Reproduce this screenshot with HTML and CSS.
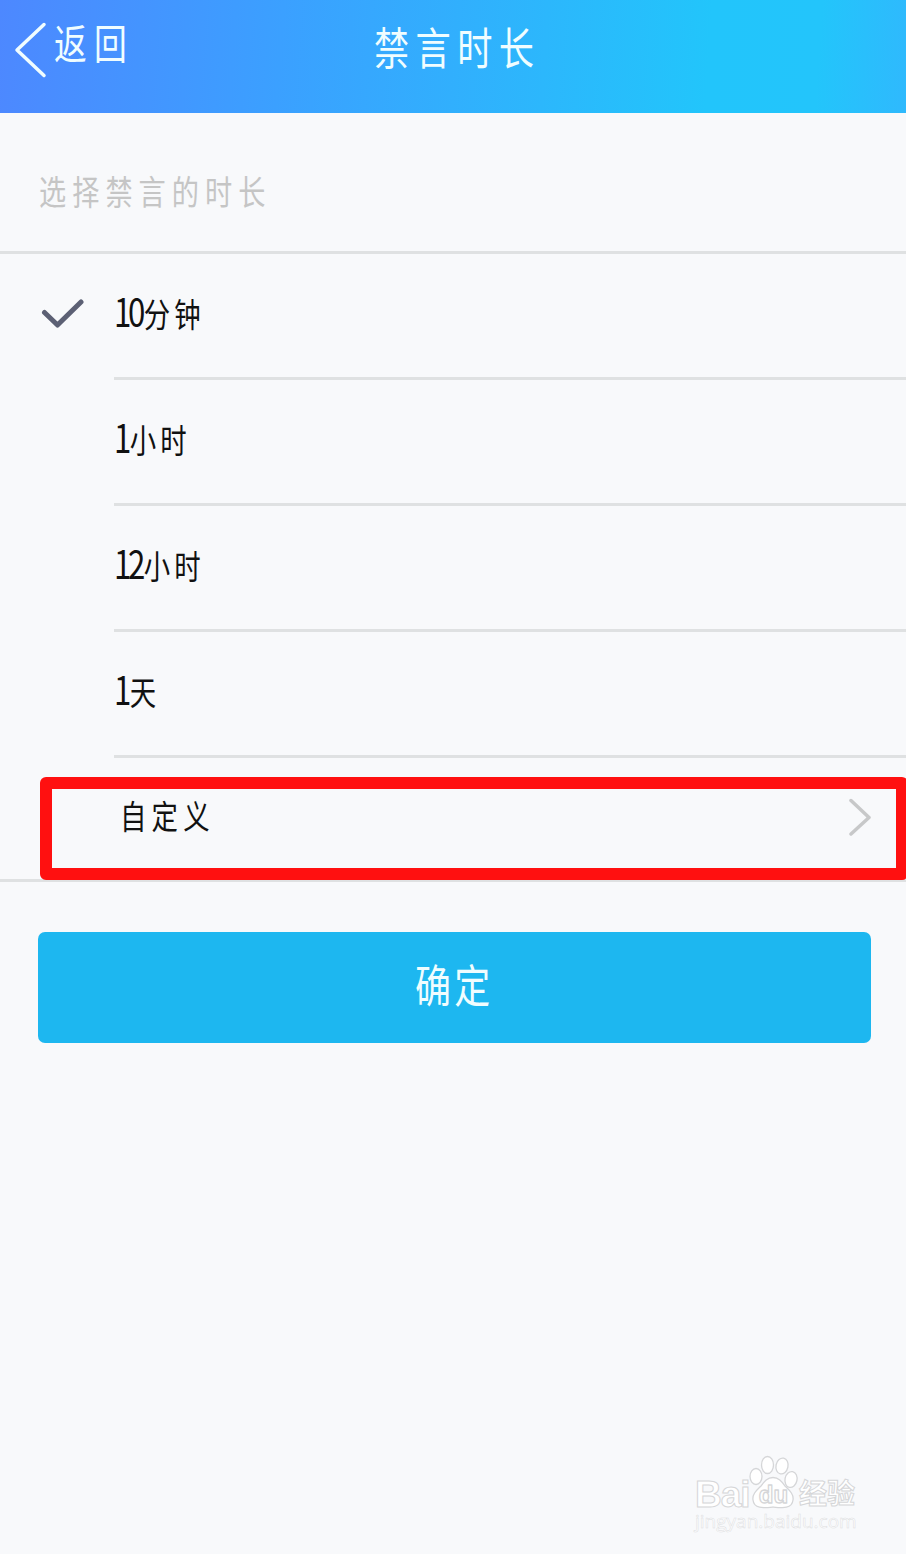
FILE: index.html
```html
<!DOCTYPE html>
<html lang="zh-CN">
<head>
    <meta charset="UTF-8">
    <title>禁言时长</title>
    <link rel="stylesheet" href="styles.css">
</head>

<body>
    <div class="page">

        <header class="header">
            <a class="back" href="#">
                <svg class="backIcon" width="34" height="56" viewBox="0 0 34 56">
                    <path d="M30 2.5 L3 28 L30 53.5" />
                </svg>
                <span class="text backText">返回</span>
            </a>
            <h1 class="text title">禁言时长</h1>
        </header>

        <div class="label"><span class="text">选择禁言的时长</span></div>

        <ul class="list">
            <li class="item">
                <svg class="check" width="44" height="32" viewBox="0 0 44 32">
                    <path d="M3.5 14.5 L16.5 27 L40 4" />
                </svg>
                <div class="cell"><span class="text"><span class="num">10</span>分钟</span></div>
            </li>
            <li class="item">
                <div class="cell"><span class="text"><span class="num">1</span>小时</span></div>
            </li>
            <li class="item">
                <div class="cell"><span class="text"><span class="num">12</span>小时</span></div>
            </li>
            <li class="item">
                <div class="cell"><span class="text"><span class="num">1</span>天</span></div>
            </li>
            <li class="item last">
                <div class="cell">
                    <span class="text custom">自定义</span>
                    <svg class="arrow" width="24" height="38" viewBox="0 0 24 38">
                        <path d="M3 2.5 L21 19.5 L3 36" />
                    </svg>
                </div>
                <div class="mark"></div>
            </li>
        </ul>

        <button class="btn"><span class="text">确定</span></button>

        <div class="logo">
            <div class="logoTop">
                <span class="bai">Bai</span>
                <svg class="paw" width="50" height="54" viewBox="0 0 50 54">
                    <ellipse cx="7" cy="21.500" rx="6" ry="8" />
                    <ellipse cx="18.500" cy="10" rx="6" ry="8.500" />
                    <ellipse cx="33" cy="11" rx="6" ry="8" transform="rotate(12 33 11)" />
                    <ellipse cx="42" cy="24.500" rx="6" ry="8" transform="rotate(12 42 24.500)" />
                    <path d="M24 22.500 C30 22.500 33 27 36 31 C40 35 45 39 44 45 C43 54 34 53 24 52 C14 53 5 54 4 45 C3 39 8 35 12 31 C15 27 18 22.500 24 22.500 Z" />
                    <text x="24.500" y="48" text-anchor="middle">du</text>
                </svg>
                <span class="jingyan">经验</span>
            </div>
            <div class="site">jingyan.baidu.com</div>
        </div>

    </div>
</body>
</html>
```

FILE: styles.css
```css
/* 全体 */
* {
    margin: 0;
    padding: 0;
    box-sizing: border-box;
    list-style-type: none;
}

body {
    background: #f8f9fb;
    font-family: "Noto Sans CJK SC", sans-serif;
    font-weight: 400;
    color: #111;
}

.page {
    position: relative;
    width: 906px;
    height: 1554px;
    overflow: hidden;
}

svg {
    fill: none;
    stroke-linecap: round;
    stroke-linejoin: round;
}

/* 瘦长的文字 */
.text {
    display: inline-block;
    line-height: 1;
    white-space: nowrap;
    transform: scaleX(.8);
    transform-origin: left center;
}

/* 顶部栏 */
.header {
    display: grid;
    grid-template-columns: 374px 1fr;
    height: 113px;
    background: linear-gradient(94deg, #4d88ff 0%, #3ba0ff 31%, #2cb7fc 60%, #22c5fb 78%, #23c5fb 90%, #2fb9fd 100%);
    color: #f0fdff;
}

.back {
    display: flex;
    align-items: flex-start;
    padding: 22px 0 0 14px;
    color: inherit;
    text-decoration: none;
}

.backIcon {
    stroke: #f0fdff;
    stroke-width: 3.5;
}

.backText {
    margin: -1px 0 0 6px;
    font-size: 41px;
    letter-spacing: 9px;
}

.title {
    padding-top: 24px;
    font-size: 44px;
    font-weight: 400;
    letter-spacing: 8px;
}

.label {
    height: 141px;
    padding: 61px 0 0 39px;
    border-bottom: 3px solid #dfe1e2;
    font-size: 34px;
    line-height: 1;
    letter-spacing: 7.5px;
    color: #c5c5c5;
}

/* 时长列表 */
.item {
    display: flex;
    position: relative;
    height: 126px;
    padding-left: 114px;
    font-size: 33px;
    letter-spacing: 5px;
}

.cell {
    display: flex;
    flex: 1;
    align-items: center;
    justify-content: space-between;
    padding-bottom: 7px;
    border-bottom: 3px solid #dfe1e2;
}

.num {
    margin-right: 2px;
    font-size: 39px;
    line-height: 33px;
    letter-spacing: -4px;
}

.check {
    position: absolute;
    left: 41px;
    top: 44px;
    stroke: #5c6074;
    stroke-width: 5;
}

.last {
    height: 124px;
    border-bottom: 3px solid #dfe1e2;
}

.last .cell {
    border-bottom: 0;
    padding: 0 34px 3px 6px;
}

.custom {
    margin-top: -4px;
    letter-spacing: 6.5px;
}

.arrow {
    stroke: #c7c8c9;
    stroke-width: 3.5;
}

/* 红色标记框 */
.mark {
    position: absolute;
    left: 40px;
    top: 19px;
    width: 868px;
    height: 103px;
    border: 12px solid #ff1010;
    border-radius: 6px;
}

.btn {
    display: flex;
    align-items: center;
    width: 833px;
    height: 111px;
    margin: 50px 0 0 38px;
    padding: 0 0 9px 377px;
    border: 0;
    border-radius: 7px;
    background: #1db7f0;
    font-family: inherit;
    font-size: 45px;
    font-weight: 400;
    letter-spacing: 4px;
    color: #f0fdff;
}

/* 水印 */
.logo {
    position: absolute;
    left: 695px;
    top: 1455px;
    width: 170px;
    color: #fff;
}

.logoTop {
    display: flex;
    align-items: flex-end;
    height: 54px;
}

.bai,
.jingyan {
    font-weight: bold;
    -webkit-text-stroke: 1px #d5d6d8;
}

.bai {
    width: 54px;
    font-family: "Liberation Sans", sans-serif;
    font-size: 37px;
    line-height: 29px;
    letter-spacing: -1px;
}

.paw {
    fill: #fff;
    stroke: #d5d6d8;
    stroke-width: 1.3;
}

.paw text {
    font: bold 24px "Liberation Sans", sans-serif;
}

.jingyan {
    margin-bottom: 3px;
    font-size: 28px;
    line-height: 28px;
}

.site {
    margin-top: 1px;
    font-family: "Open Sans", sans-serif;
    font-size: 19px;
    font-weight: 400;
    line-height: 23px;
    -webkit-text-stroke: .5px #dcdddf;
}
```
